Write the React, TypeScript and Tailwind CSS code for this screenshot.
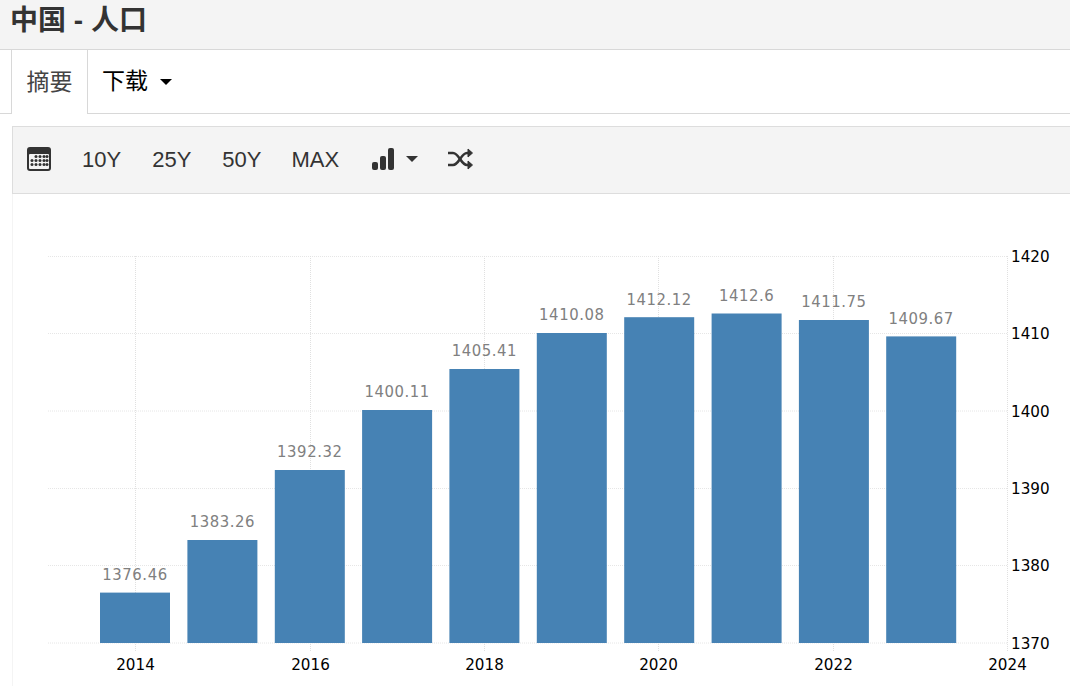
const cjk = "font-['Liberation_Sans','Noto_Sans_CJK_SC',sans-serif]";

const data = [
  { x: 100, y: 592.6, v: "1376.46" },
  { x: 187.4, y: 540, v: "1383.26" },
  { x: 274.8, y: 470, v: "1392.32" },
  { x: 362.1, y: 410, v: "1400.11" },
  { x: 449.4, y: 369, v: "1405.41" },
  { x: 536.8, y: 333, v: "1410.08" },
  { x: 624.2, y: 317.2, v: "1412.12" },
  { x: 711.6, y: 313.5, v: "1412.6" },
  { x: 798.9, y: 320, v: "1411.75" },
  { x: 886.2, y: 336.4, v: "1409.67" },
];

const rows = [
  { y: 256.5, v: "1420" },
  { y: 333.5, v: "1410" },
  { y: 411, v: "1400" },
  { y: 488.5, v: "1390" },
  { y: 565.5, v: "1380" },
  { y: 643, v: "1370" },
];

const cols = [
  { x: 135.5, v: "2014" },
  { x: 310.5, v: "2016" },
  { x: 484.5, v: "2018" },
  { x: 658.5, v: "2020" },
  { x: 833.5, v: "2022" },
  { x: 1007.5, v: "2024" },
];

const Caret = ({ className }: { className: string }) => (
  <span className={`w-0 h-0 border-x-[6px] border-x-transparent border-t-[6px] ${className}`} />
);

const CalendarIcon = () => (
  <svg width="26" height="26" viewBox="0 0 26 26">
    <rect x="1" y="1" width="24" height="24" rx="3" fill="#333" />
    <rect x="3" y="8" width="20" height="15" rx="1" fill="#f4f4f4" />
    {[10.5, 14.5, 18.5].map((y, r) =>
      [6, 10, 14, 18, 21].map((x) =>
        r === 0 && x < 10 ? null : <circle key={`${x}-${y}`} cx={x} cy={y} r="1.5" fill="#333" />
      )
    )}
  </svg>
);

const BarsIcon = () => (
  <svg width="22" height="22" viewBox="0 0 22 22">
    <rect x="0" y="14" width="6" height="8" rx="2" fill="#333" />
    <rect x="8" y="8" width="6" height="14" rx="2" fill="#333" />
    <rect x="16" y="0" width="6" height="22" rx="2" fill="#333" />
  </svg>
);

const ShuffleIcon = () => (
  <svg width="26" height="22" viewBox="0 0 26 22" fill="none" stroke="#333" strokeWidth="2.6">
    <path d="M0 5h5c6 0 8 12 14 12h4" />
    <path d="M0 17h5c6 0 8-12 14-12h4" />
    <path d="M20 1l4.500 4-4.500 4z" fill="#333" strokeWidth="1" />
    <path d="M20 13l4.500 4-4.500 4z" fill="#333" strokeWidth="1" />
  </svg>
);

const axisFont = "'DejaVu Sans', sans-serif";

const Chart = () => (
  <svg width="1057" height="492" viewBox="13 194 1057 492" className="block">
    {rows.map((r) => (
      <line key={r.v} x1="48" x2="1008" y1={r.y} y2={r.y} stroke="#e6e6e6" strokeWidth="1" strokeDasharray="1 1" />
    ))}
    {cols.map((c) => (
      <line key={c.v} x1={c.x} x2={c.x} y1="256" y2="652" stroke="#e0e0e0" strokeWidth="1" strokeDasharray="1 1" />
    ))}
    {data.map((d) => (
      <g key={d.v}>
        <rect x={d.x} y={d.y} width="70" height={643 - d.y} fill="#4682b4" />
        <text x={d.x + 35} y={d.y - 12.5} textAnchor="middle" fontSize="16" letterSpacing="0.6" fill="#808080" fontFamily={axisFont} transform={`translate(${d.x + 35} 0) scale(0.93 1) translate(${-(d.x + 35)} 0)`}>
          {d.v}
        </text>
      </g>
    ))}
    {rows.map((r) => (
      <text key={r.v} x="1011" y={r.y + 6} fontSize="16" fill="#000" fontFamily={axisFont} transform="translate(1011 0) scale(0.95 1) translate(-1011 0)">
        {r.v}
      </text>
    ))}
    {cols.map((c) => (
      <text key={c.v} x={c.x} y="670" textAnchor="middle" fontSize="16" fill="#000" fontFamily={axisFont} transform={`translate(${c.x} 0) scale(0.95 1) translate(${-c.x} 0)`}>
        {c.v}
      </text>
    ))}
  </svg>
);

export default function App() {
  return (
    <div className={`w-[1070px] h-[686px] overflow-hidden bg-white ${cjk}`}>
      <div className="h-[50px] bg-[#f4f4f4] border-b border-[#d8d8d8] pl-[10px] flex items-center">
        <h1 className="text-[28px] font-bold text-[#333] leading-none -mt-[7px]">中国 - 人口</h1>
      </div>

      <div className="h-[64px] flex">
        <div className="w-[11px] border-b border-[#d8d8d8]" />
        <div className="w-[77px] h-[64px] border-x border-[#d8d8d8] bg-white flex items-center justify-center text-[23px] text-[#444]">
          摘要
        </div>
        <div className="flex-1 border-b border-[#d8d8d8] pl-[14px] flex items-center gap-[12px] text-[23px] text-black">
          下载
          <Caret className="border-t-black" />
        </div>
      </div>

      <div className="ml-[12px] mt-[12px] w-[1070px] h-[68px] bg-[#f4f4f4] border border-[#dddddd] flex items-center pl-[13px] pb-[2px] text-[22px] text-[#333]">
        <CalendarIcon />
        <span className="ml-[30px]">10Y</span>
        <span className="ml-[31px]">25Y</span>
        <span className="ml-[31px]">50Y</span>
        <span className="ml-[30px]">MAX</span>
        <span className="ml-[33px]"><BarsIcon /></span>
        <Caret className="ml-[12px] border-t-[#333]" />
        <span className="ml-[30px]"><ShuffleIcon /></span>
      </div>

      <div className="ml-[12px] border-l border-[#f4f4f4]">
        <Chart />
      </div>
    </div>
  );
}
